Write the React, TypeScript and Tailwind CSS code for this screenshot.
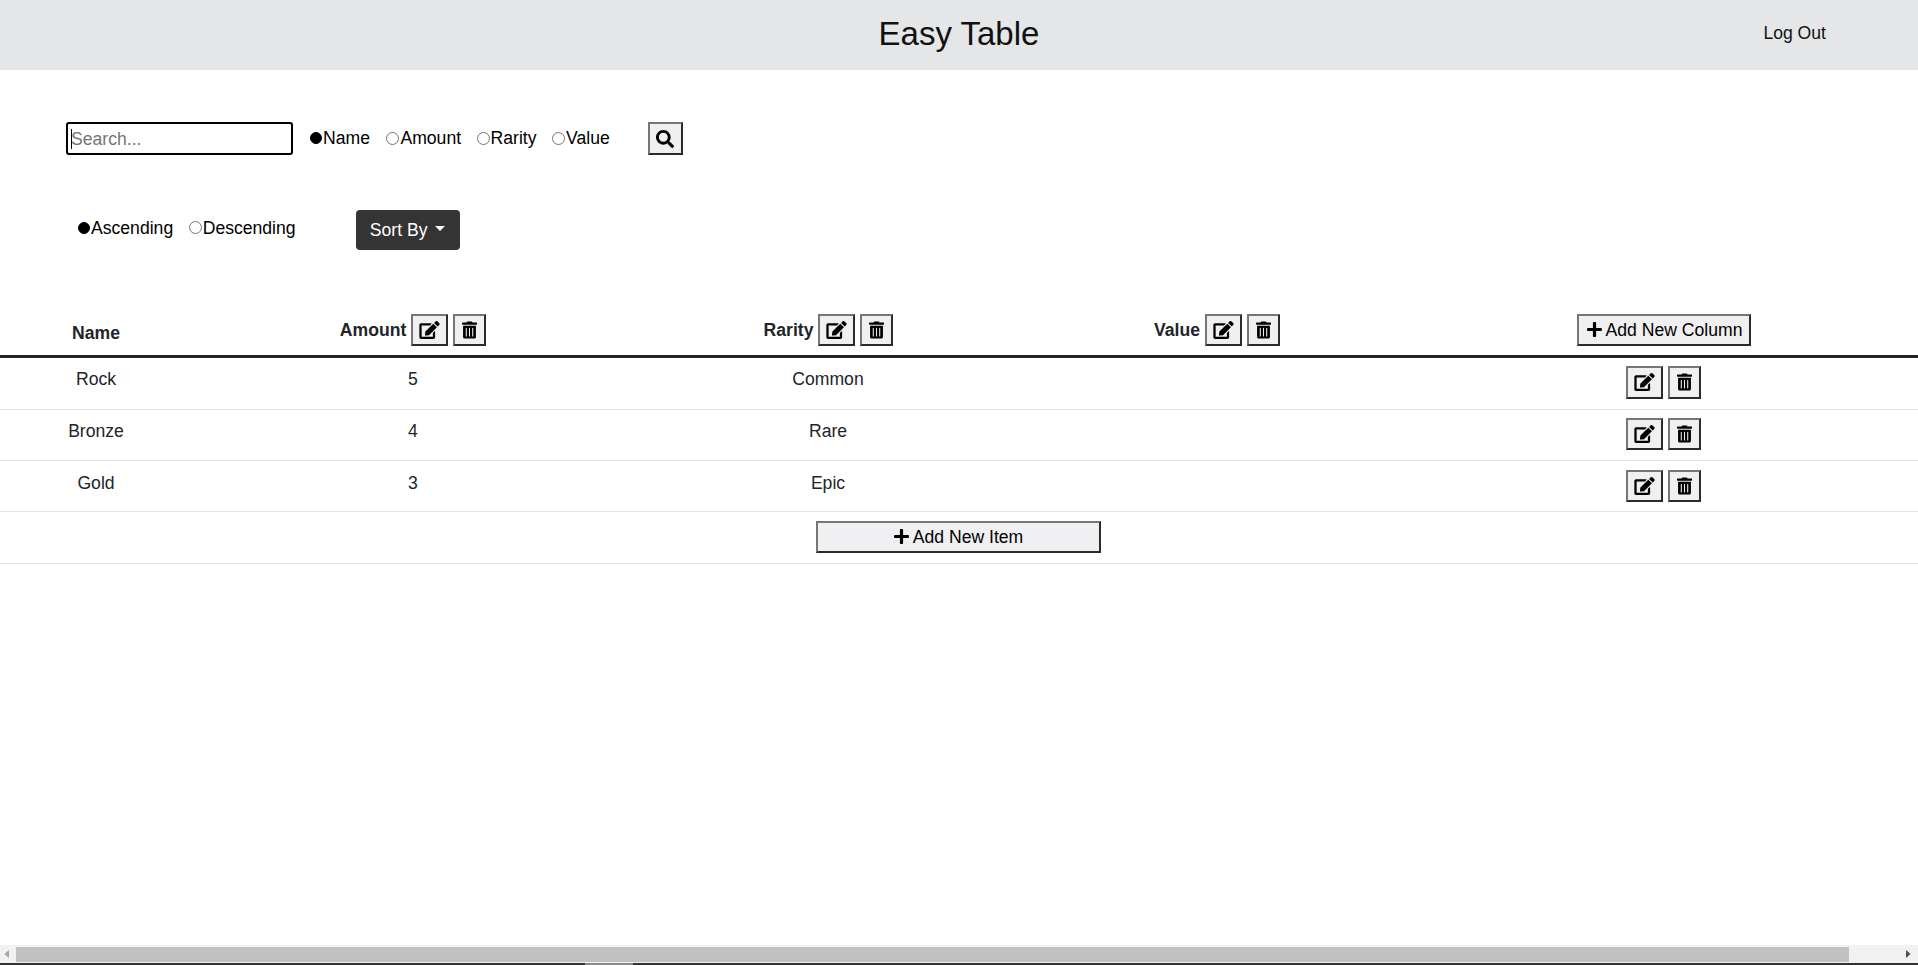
import { FaEdit, FaTrashAlt, FaSearch, FaPlus } from "react-icons/fa";

const font = { fontFamily: '"Liberation Sans", Arial, sans-serif' };

const btn =
  "align-baseline bg-[#f0eff1] text-black border-2 border-t-[#767676] border-l-[#767676] border-r-[#2b2b2b] border-b-[#2b2b2b] py-[1px] leading-[26.4px] text-[17.6px]";

function Radio({ name, label, checked, extra }: { name: string; label: string; checked?: boolean; extra?: string }) {
  return (
    <label className={`flex items-center ${extra ?? ""}`}>
      <input
        type="radio"
        name={name}
        defaultChecked={checked}
        className="appearance-none w-[13px] h-[13px] rounded-full border border-[#767676] checked:w-[12px] checked:h-[12px] checked:bg-black checked:border-black mr-[1px]"
      />
      <span>{label}</span>
    </label>
  );
}

function Edit() {
  return (
    <button className={`${btn} inline-block px-[6px] mr-[5px]`}>
      <FaEdit className="inline-block w-[21px] h-[18px] align-[-3px]" />
    </button>
  );
}

function Trash() {
  return (
    <button className={`${btn} inline-block px-[7px]`}>
      <FaTrashAlt className="inline-block w-[15px] h-[18px] align-[-3px]" />
    </button>
  );
}

function Head({ label, extra }: { label: string; extra?: string }) {
  return (
    <th className={`pt-2 pb-[9px] align-bottom text-center font-bold border-b-[3px] border-[#212529] ${extra ?? "px-2"}`}>
      {label} <Edit />
      <Trash />
    </th>
  );
}

const rows = [
  { cells: ["Rock", "5", "Common"], text: "pt-2 px-2 pb-2", action: "pt-2 pb-[9.700px]" },
  { cells: ["Bronze", "4", "Rare"], text: "pt-2 px-2 pb-2", action: "pt-2 pb-[9.700px]" },
  { cells: ["Gold", "3", "Epic"], text: "pt-[9px] px-2 pb-2", action: "pt-[9px] pb-[8.700px]" },
];

export default function App() {
  return (
    <div style={font} className="h-[965px] w-[1918px] overflow-hidden flex flex-col bg-white text-[17.6px] text-black">
      <header className="h-[70px] shrink-0 bg-[#e5e6e8] grid grid-cols-3 items-center">
        <div />
        <h1 className="text-center text-[33px] leading-[40px] text-[#111] -mt-[2px]">Easy Table</h1>
        <a className="justify-self-end pr-[92px] text-[#111] -mt-[3px]">Log Out</a>
      </header>

      <main className="flex-1">
        <div className="flex items-center pl-[66px] pt-[52px]">
          <div className="relative">
            <input
              placeholder="Search..."
              className="block w-[227px] h-[33px] border-2 border-black rounded-[3px] px-[3px] pt-[1px] outline-none placeholder:text-[#757575]"
            />
            <span className="absolute left-[5px] top-[7px] w-[1px] h-[20px] bg-black" />
          </div>
          <div className="flex items-center ml-[17px] gap-[15.5px]">
            <Radio name="field" label="Name" checked extra="mr-[1px]" />
            <Radio name="field" label="Amount" />
            <Radio name="field" label="Rarity" />
            <Radio name="field" label="Value" />
          </div>
          <button className={`${btn} ml-[38px] h-[33px] w-[35px] flex items-center justify-center`}>
            <FaSearch className="w-[18px] h-[18px]" />
          </button>
        </div>

        <div className="flex items-center pl-[78px] mt-[55px]">
          <div className="flex items-center gap-[15.5px] -mt-[4px]">
            <Radio name="dir" label="Ascending" checked />
            <Radio name="dir" label="Descending" />
          </div>
          <button className="ml-[60px] h-[40px] w-[104px] rounded-[4px] bg-[#343434] text-white flex items-center justify-center gap-[8px]">
            Sort By
            <span className="w-0 h-0 border-x-[5.5px] border-x-transparent border-t-[5.5px] border-t-white -mt-[3px]" />
          </button>
        </div>

        <table className="w-full table-fixed mt-[56px] text-[#212529] border-collapse">
          <colgroup>
            <col className="w-[192px]" />
            <col className="w-[442px]" />
            <col className="w-[388px]" />
            <col className="w-[389px]" />
            <col className="w-[507px]" />
          </colgroup>
          <thead>
            <tr>
              <th className="pt-2 px-2 pb-[9px] align-bottom text-center font-bold border-b-[3px] border-[#212529]">Name</th>
              <Head label="Amount" />
              <Head label="Rarity" extra="pl-[9px] pr-[8px]" />
              <Head label="Value" extra="pl-[9px] pr-[8px]" />
              <th className="pt-2 px-2 pb-[9px] align-bottom text-center font-normal border-b-[3px] border-[#212529]">
                <button className={`${btn} inline-block px-[7px] mr-[1px]`}>
                  <FaPlus className="inline-block w-[17px] h-[17px] align-[-2px] mr-[3px]" />
                  Add New Column
                </button>
              </th>
            </tr>
          </thead>
          <tbody>
            {rows.map((r) => (
              <tr key={r.cells[0]} className="border-b border-[#dee2e6]">
                {r.cells.map((c) => (
                  <td key={c} className={`${r.text} align-top text-center leading-[26.4px]`}>
                    {c}
                  </td>
                ))}
                <td />
                <td className={`${r.action} pl-2 pr-[11px] text-center align-top leading-[0]`}>
                  <Edit />
                  <Trash />
                </td>
              </tr>
            ))}
            <tr className="border-b border-[#dee2e6]">
              <td colSpan={5} className="pt-[9px] pb-[10.100px] text-center align-top leading-[0]">
                <button className={`${btn} inline-block px-[6px] w-[285px] mr-[2px]`}>
                  <FaPlus className="inline-block w-[17px] h-[17px] align-[-2px] mr-[3px]" />
                  Add New Item
                </button>
              </td>
            </tr>
          </tbody>
        </table>
      </main>

      <div className="h-[18px] shrink-0 bg-[#f1f1f1] flex items-center">
        <svg width="16" height="18" viewBox="0 0 16 18" className="shrink-0">
          <path d="M9 5v8L4.500 9z" fill="#a3a3a3" />
        </svg>
        <div className="w-[1833px] h-[15px] bg-[#c1c1c1]" />
        <div className="flex-1" />
        <svg width="16" height="18" viewBox="0 0 16 18" className="shrink-0 mr-[2px]">
          <path d="M6 5v8l4.500-4z" fill="#505050" />
        </svg>
      </div>
      <div className="h-[2px] shrink-0 bg-[#333] pl-[585px]">
        <div className="h-full w-[48px] bg-[#8a8a8a]" />
      </div>
    </div>
  );
}
